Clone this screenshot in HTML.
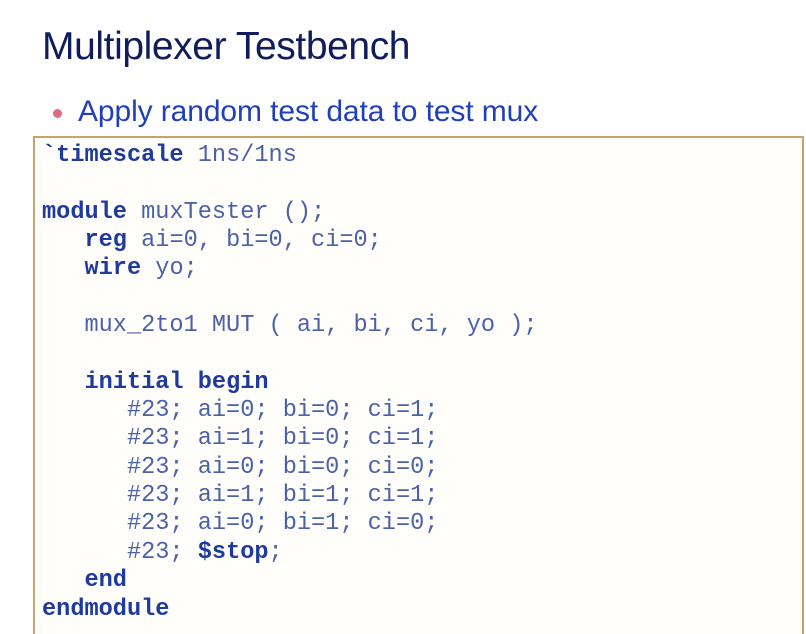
<!DOCTYPE html>
<html><head><style>
html{overflow:hidden;height:634px}
body{margin:0;width:806px;height:634px;overflow:hidden;background:#fff;font-family:"Liberation Sans",sans-serif;position:relative}
.t{position:absolute;left:42px;top:25px;font-size:39px;color:#101c5c;letter-spacing:-0.4px;white-space:nowrap}
.b{position:absolute;left:78px;top:95px;font-size:30px;color:#2140b8;letter-spacing:-0.1px;white-space:nowrap}
.dot{position:absolute;left:53px;top:109px;width:9px;height:9px;border-radius:50%;background:#e06a82}
.box{position:absolute;left:33px;top:136px;width:767px;height:496px;border:2px solid #c9a468;border-bottom:none;background:#fffefb}
pre{position:absolute;left:42px;top:142px;margin:0;font-family:"Liberation Mono",monospace;font-size:23.6px;line-height:28.35px;color:#4a62a8}
b{color:#1e3a9c}
</style></head><body>
<div class="t">Multiplexer Testbench</div>
<div class="dot"></div>
<div class="b">Apply random test data to test mux</div>
<div class="box"></div>
<pre><b>`timescale</b> 1ns/1ns

<b>module</b> muxTester ();
   <b>reg</b> ai=0, bi=0, ci=0;
   <b>wire</b> yo;

   mux_2to1 MUT ( ai, bi, ci, yo );

   <b>initial begin</b>
      #23; ai=0; bi=0; ci=1;
      #23; ai=1; bi=0; ci=1;
      #23; ai=0; bi=0; ci=0;
      #23; ai=1; bi=1; ci=1;
      #23; ai=0; bi=1; ci=0;
      #23; <b>$stop</b>;
   <b>end</b>
<b>endmodule</b></pre>
</body></html>
